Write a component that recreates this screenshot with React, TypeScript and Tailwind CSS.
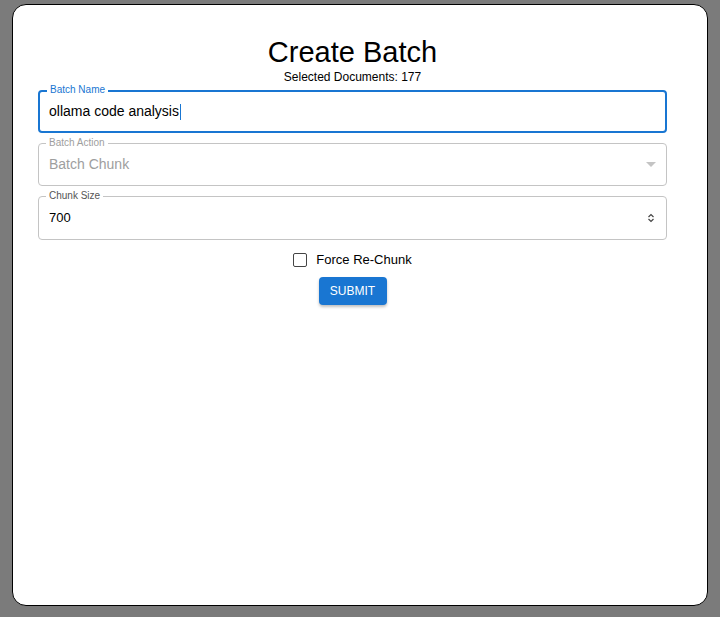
export default function App() {
  const font = { fontFamily: '"Liberation Sans", Arial, sans-serif' };
  return (
    <div className="h-[617px] w-[720px] bg-[#7b7b7b] px-[12px] pt-[4px] pb-[11px]" style={font}>
      <div className="flex h-full flex-col items-center rounded-[14px] border border-black bg-white pl-[25px] pr-[40px] pt-[30px]">
        <h1 className="text-[29px] leading-[34px] text-black">Create Batch</h1>
        <p className="text-[12px] leading-[16px] text-black">Selected Documents: 177</p>

        <div className="relative mt-[5px] h-[43px] w-full rounded-[4px] border-2 border-[#1976d2]">
          <span className="absolute -top-[8px] left-[7px] bg-white px-[3px] text-[10px] leading-[12px] text-[#1976d2]">Batch Name</span>
          <div className="flex h-full items-center px-[9px] text-[14px] text-black">
            ollama code analysis<span className="ml-[1px] inline-block h-[16px] w-[1px] bg-[#1976d2]" />
          </div>
        </div>

        <div className="relative mt-[10px] h-[43px] w-full rounded-[4px] border border-[#c4c4c4]">
          <span className="absolute -top-[7px] left-[7px] bg-white px-[3px] text-[10px] leading-[12px] text-[#9e9e9e]">Batch Action</span>
          <div className="flex h-full items-center justify-between pl-[10px] pr-[10px] text-[14px] text-[#9e9e9e]">
            Batch Chunk
            <svg width="10" height="5" viewBox="0 0 10 5"><path d="M0 0h10L5 5z" fill="#c4c4c4" /></svg>
          </div>
        </div>

        <div className="relative mt-[10px] h-[44px] w-full rounded-[4px] border border-[#c4c4c4]">
          <span className="absolute -top-[7px] left-[7px] bg-white px-[3px] text-[10px] leading-[12px] text-[#555]">Chunk Size</span>
          <div className="flex h-full items-center justify-between pl-[10px] pr-[11px] text-[13px] text-black">
            700
            <svg width="8" height="12" viewBox="0 0 8 12"><path d="M1.5 5 4 2.5 6.5 5M1.5 7 4 9.5 6.5 7" fill="none" stroke="#444" strokeWidth="1.2" /></svg>
          </div>
        </div>

        <label className="mt-[10px] flex items-center gap-[9px] text-[13px] text-black">
          <span className="h-[14px] w-[14px] rounded-[2px] border-[1.5px] border-[#444]" />
          Force Re-Chunk
        </label>

        <button className="mt-[7px] h-[28px] w-[68px] rounded-[4px] bg-[#1976d2] text-[12px] font-medium text-white shadow-[0_2px_3px_rgba(0,0,0,0.25)]">
          SUBMIT
        </button>
      </div>
    </div>
  );
}
